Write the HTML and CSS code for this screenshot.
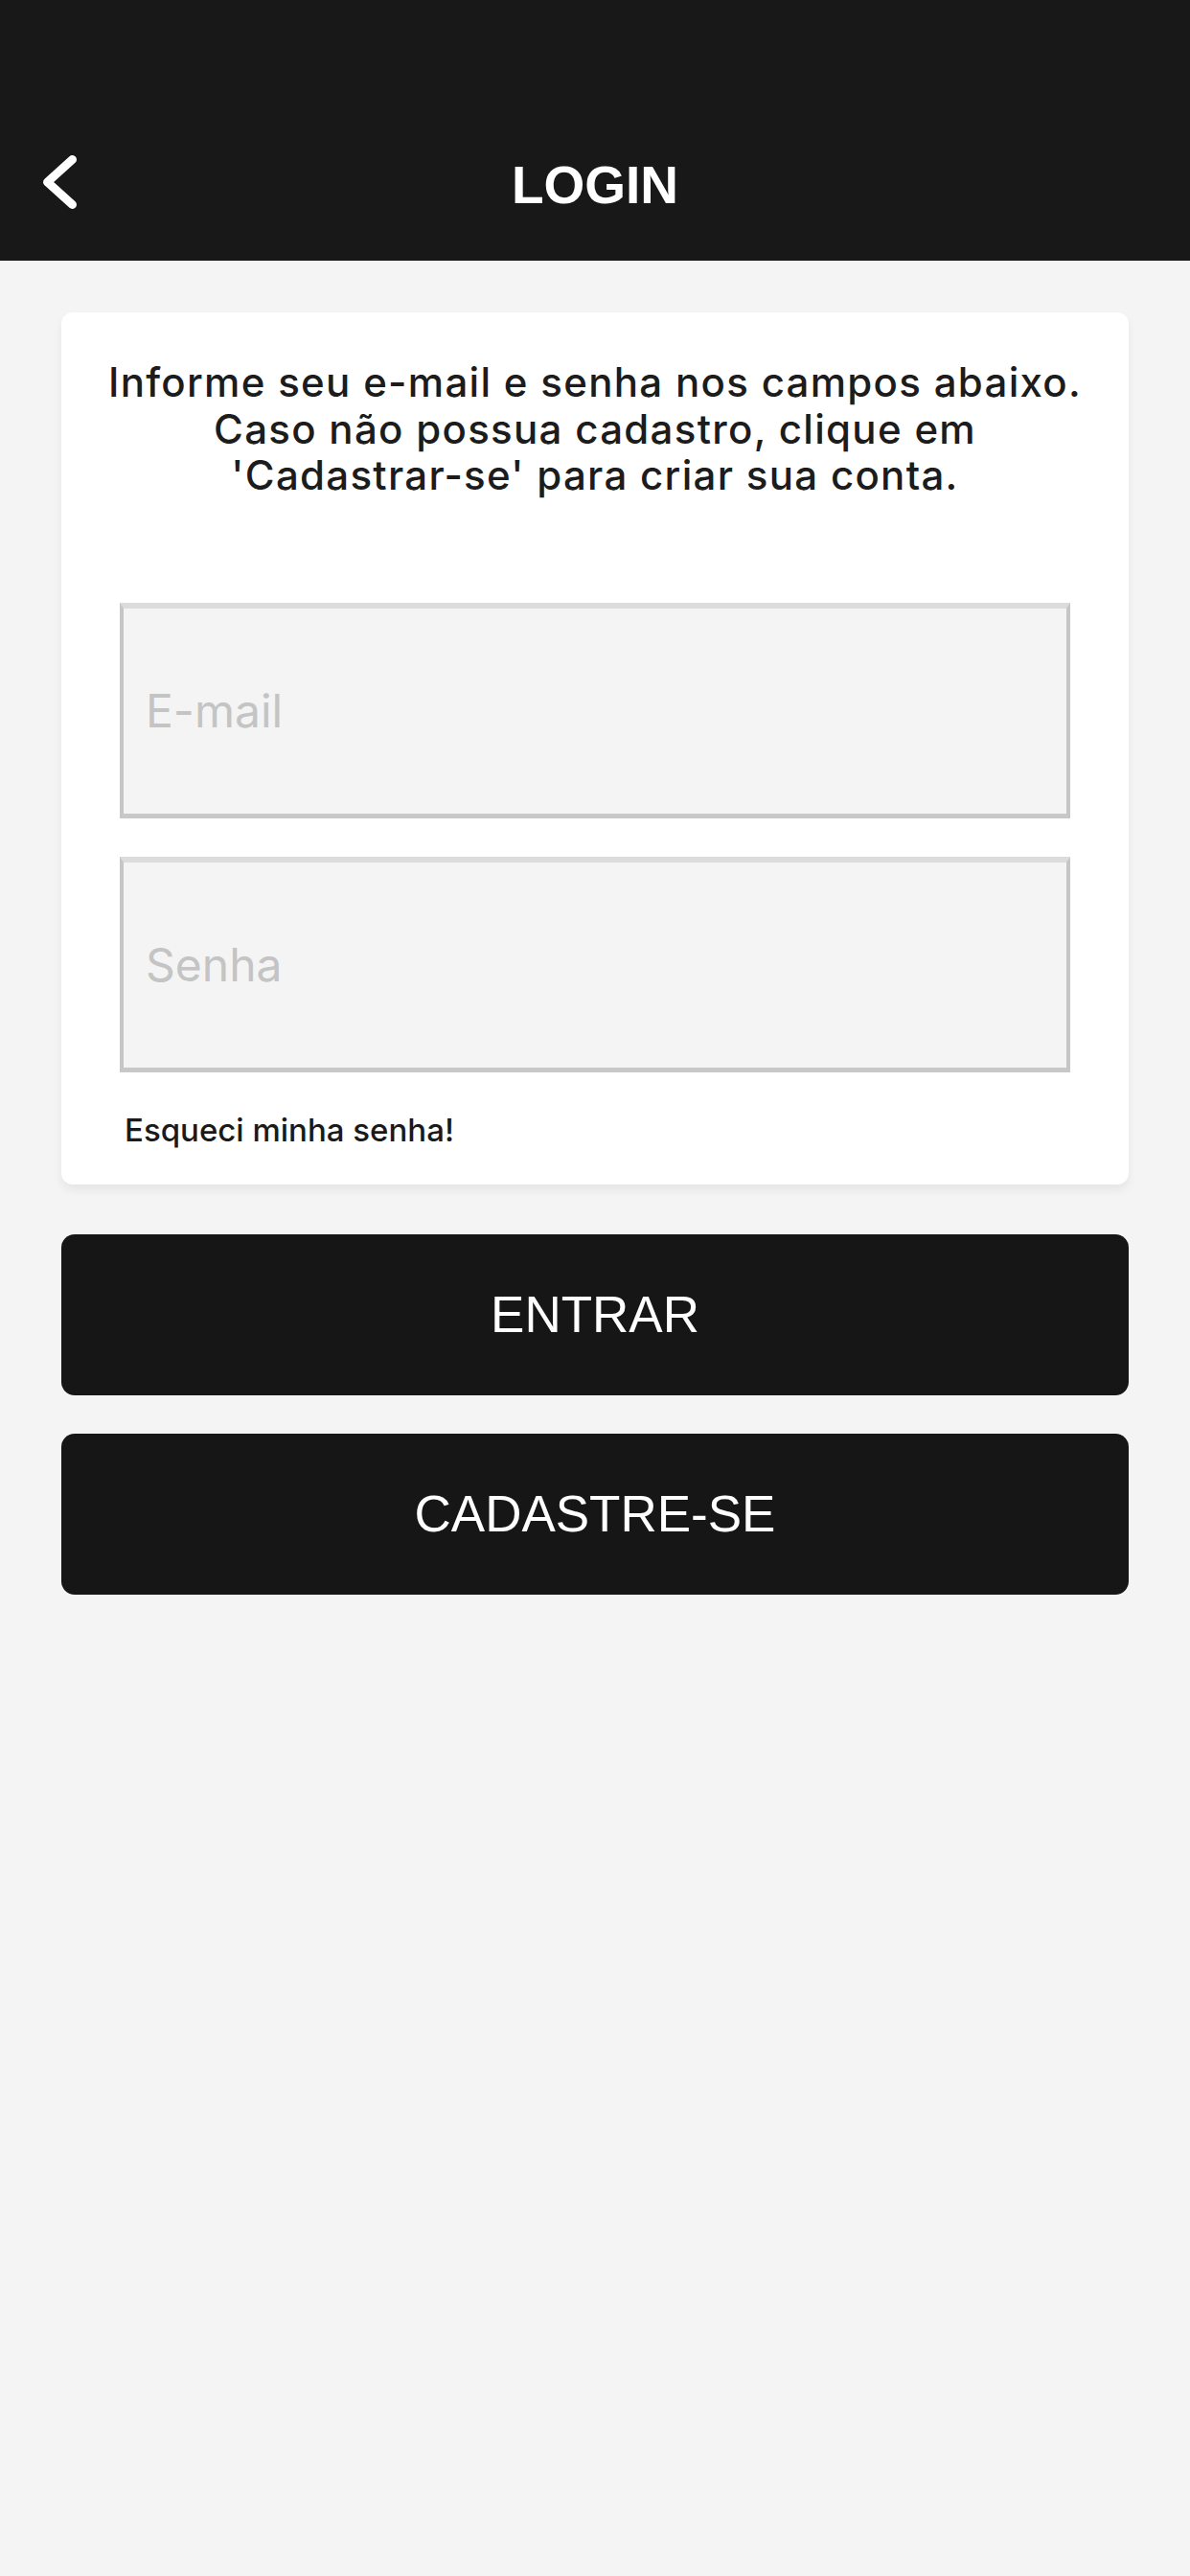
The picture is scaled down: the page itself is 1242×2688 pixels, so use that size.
FILE: index.html
```html
<!DOCTYPE html>
<html lang="pt-BR">
<head>
<meta charset="utf-8">
<title>Login</title>
<link rel="stylesheet" href="styles.css">
</head>
<body>
<header class="header">
  <div class="status"></div>
  <nav class="navbar">
    <div class="nav-left">
      <svg class="back" width="50" height="70" viewBox="0 0 50 70" aria-hidden="true">
        <path d="M37.5 11.5 L11.5 35 L37.5 58.5" fill="none" stroke="#ffffff" stroke-width="9" stroke-linecap="round" stroke-linejoin="round"/>
      </svg>
    </div>
    <h1 class="title">LOGIN</h1>
    <div class="nav-right"></div>
  </nav>
</header>
<main class="content">
  <section class="card">
    <p class="intro">Informe seu e-mail e senha nos campos abaixo.<br>Caso não possua cadastro, clique em<br>'Cadastrar-se' para criar sua conta.</p>
    <div class="fields">
      <div class="field"><span class="placeholder">E-mail</span></div>
      <div class="field"><span class="placeholder">Senha</span></div>
    </div>
    <a class="forgot">Esqueci minha senha!</a>
  </section>
  <div class="actions">
    <button class="btn">ENTRAR</button>
    <button class="btn">CADASTRE-SE</button>
  </div>
</main>
</body>
</html>
```

FILE: styles.css
```css
html, body {
  margin: 0;
  padding: 0;
}
body {
  width: 1242px;
  min-height: 2688px;
  background: #f4f4f4;
  font-family: Inter, "Liberation Sans", Arial, sans-serif;
  color: #1a1a1a;
}
.header {
  height: 272px;
  background: #181818;
  display: flex;
  flex-direction: column;
}
.status {
  height: 130px;
}
.navbar {
  height: 120px;
  display: grid;
  grid-template-columns: 1fr auto 1fr;
  align-items: center;
}
.nav-left {
  padding-left: 38px;
  display: flex;
  align-items: center;
}
.back {
  display: block;
}
.title {
  margin: 0;
  color: #ffffff;
  font-family: "Liberation Sans", Arial, sans-serif;
  font-weight: 700;
  font-size: 55px;
  line-height: 60px;
  padding-top: 6px;
}
.content {
  padding: 54px 64px 0 64px;
}
.card {
  background: #ffffff;
  border-radius: 12px;
  box-shadow: 0 6px 10px rgba(0,0,0,0.06);
  padding: 49px 61px 37px 61px;
}
.intro {
  margin: 0 -40px;
  text-align: center;
  white-space: nowrap;
  font-size: 42px;
  line-height: 48.5px;
  font-weight: 500;
  letter-spacing: 1.3px;
  color: #1c1c1c;
}
.fields {
  margin-top: 108px;
  display: flex;
  flex-direction: column;
  gap: 40px;
}
.field {
  height: 225px;
  box-sizing: border-box;
  background: #f4f4f4;
  border: 4px solid #c6c6c6;
  border-top: 6px solid #dcdcdc;
  border-bottom: 5px solid #c8c8c8;
  display: flex;
  align-items: center;
  padding-left: 23px;
}
.placeholder {
  font-size: 48px;
  color: #c4c4c4;
  font-weight: 400;
}
.forgot {
  display: block;
  margin-top: 40px;
  margin-left: 5px;
  font-size: 33px;
  line-height: 40px;
  font-weight: 500;
  color: #1a1a1a;
}
.actions {
  margin-top: 52px;
  display: flex;
  flex-direction: column;
  gap: 40px;
}
.btn {
  height: 168px;
  border: none;
  border-radius: 14px;
  background: #161616;
  color: #ffffff;
  font-family: "Liberation Sans", Arial, sans-serif;
  font-size: 53px;
  font-weight: 400;
  padding: 0;
}
```
